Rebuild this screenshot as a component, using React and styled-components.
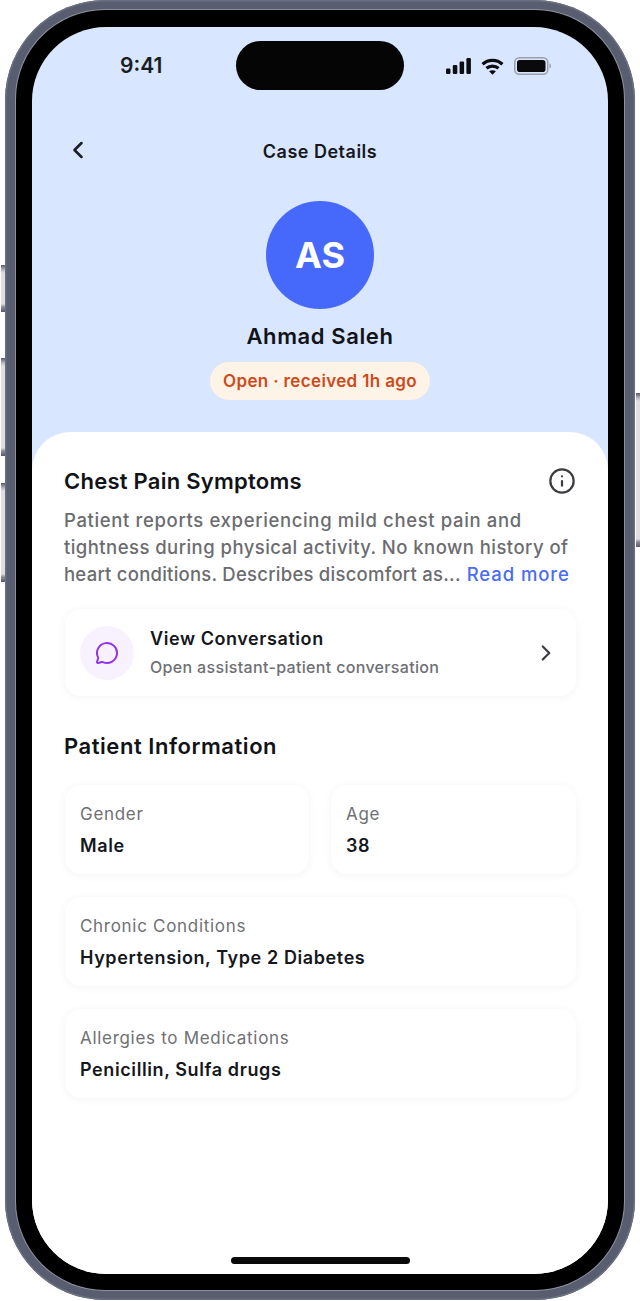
import React from "react";
import styled, { createGlobalStyle } from "styled-components";
import { ChevronLeft, ChevronRight, Info, MessageCircle } from "lucide-react";

const GlobalStyle = createGlobalStyle`
  html, body {
    margin: 0;
    padding: 0;
    background: #fff;
  }
  body {
    font-family: Inter, "Open Sans", "Liberation Sans", sans-serif;
    color: #111318;
    -webkit-font-smoothing: antialiased;
  }
  * {
    box-sizing: border-box;
  }
`;

const Page = styled.div`
  width: 640px;
  height: 1301px;
  padding-left: 5px;
  position: relative;
  overflow: hidden;
`;

const Frame = styled.div`
  width: 630px;
  height: 1300px;
  padding: 10px 11px 10px 11px;
  border-radius: 100px;
  background: #585e70;
  box-shadow: inset 0 0 0 1.5px #696f81;
`;

const Bezel = styled.div`
  height: 100%;
  padding: 17px 16px 16px 16px;
  border-radius: 89px;
  background: #000;
  box-shadow: 0 0 0 1px #8d92a0;
`;

const SideButton = styled.div`
  position: absolute;
  width: 4.5px;
  top: ${(p) => p.$top}px;
  height: ${(p) => p.$height}px;
  ${(p) => (p.$right ? "right: 0;" : "left: 0.5px;")}
  background: linear-gradient(
    180deg,
    #55596a 0,
    #b9bac0 5px,
    #dfdfe2 8px,
    #dfdfe2 calc(100% - 8px),
    #8c8d94 calc(100% - 5px),
    #55596a 100%
  );
`;

const Screen = styled.div`
  position: relative;
  height: 100%;
  display: flex;
  flex-direction: column;
  border-radius: 74px;
  overflow: hidden;
  background: #d8e6ff;
`;

const Island = styled.div`
  position: absolute;
  top: 14px;
  left: 204px;
  width: 168px;
  height: 49px;
  border-radius: 25px;
  background: #050505;
`;

const StatusBar = styled.div`
  height: 76px;
  padding: 27px 57px 0 88px;
  display: flex;
  align-items: flex-start;
  justify-content: space-between;
`;

const Clock = styled.span`
  font-size: 21px;
  line-height: 24px;
  font-weight: 600;
  color: #1a1d24;
`;

const StatusIcons = styled.div`
  display: flex;
  align-items: center;
  gap: 10px;
  height: 24px;
`;

const NavBar = styled.div`
  position: relative;
  height: 96px;
  padding-top: 2px;
  display: flex;
  align-items: center;
  justify-content: center;
`;

const BackButton = styled.span`
  position: absolute;
  left: 32px;
  top: 33px;
  display: flex;
  color: #1a1d24;
`;

const NavTitle = styled.h1`
  margin: 0;
  font-size: 18px;
  line-height: 24px;
  font-weight: 600;
  letter-spacing: 0.5px;
  color: #16181d;
`;

const Profile = styled.div`
  display: flex;
  flex-direction: column;
  align-items: center;
  height: 231px;
  margin-top: 2px;
`;

const Avatar = styled.div`
  width: 108px;
  height: 108px;
  border-radius: 50%;
  background: #4769fb;
  color: #fff;
  display: flex;
  align-items: center;
  justify-content: center;
  font-size: 36px;
  font-weight: 700;
`;

const PatientName = styled.div`
  margin-top: 13px;
  font-size: 22px;
  line-height: 28px;
  font-weight: 600;
  letter-spacing: 0.6px;
  color: #111318;
`;

const StatusPill = styled.div`
  margin-top: 12px;
  height: 38px;
  width: 220px;
  border-radius: 19px;
  background: #fdf3e6;
  color: #cf4a1a;
  display: flex;
  align-items: center;
  justify-content: center;
  font-size: 17px;
  font-weight: 600;
  letter-spacing: 0.35px;
`;

const Sheet = styled.div`
  flex: 1;
  padding: 32px 32px 0 32px;
  border-radius: 38px 38px 0 0;
  background: #fff;
`;

const TitleRow = styled.div`
  display: flex;
  align-items: center;
  justify-content: space-between;
  height: 34px;
`;

const SectionTitle = styled.h2`
  margin: 0;
  font-size: 22px;
  line-height: 34px;
  font-weight: 600;
  letter-spacing: 0.25px;
  color: #111318;
`;

const InfoButton = styled.span`
  display: flex;
  color: #3c3c40;
`;

const Summary = styled.p`
  margin: 9px 0 0 0;
  font-size: 18.5px;
  line-height: 27px;
  font-weight: 500;
  white-space: nowrap;
  color: #6b6c70;
`;

const SummaryLine = styled.span`
  display: block;
  letter-spacing: ${(p) => p.$spacing}px;
`;

const ReadMore = styled.span`
  margin-left: 1px;
  letter-spacing: 0.9px;
  color: #4a6cf0;
`;

const Card = styled.div`
  border-radius: 16px;
  background: #fff;
  box-shadow: 0 1px 10px rgba(20, 24, 40, 0.05);
`;

const ConversationCard = styled(Card)`
  margin: 21px 0 0 1px;
  height: 87px;
  padding: 0 17px 0 15px;
  display: flex;
  align-items: center;
`;

const IconBadge = styled.div`
  width: 54px;
  height: 54px;
  border-radius: 50%;
  background: #f8f1ff;
  color: #9333ea;
  display: flex;
  align-items: center;
  justify-content: center;
`;

const ConversationText = styled.div`
  flex: 1;
  margin-left: 16px;
  display: flex;
  flex-direction: column;
  gap: 7px;
`;

const ConversationTitle = styled.div`
  font-size: 18px;
  line-height: 22px;
  font-weight: 600;
  letter-spacing: 0.57px;
  color: #15171c;
`;

const ConversationSub = styled.div`
  font-size: 16px;
  line-height: 20px;
  font-weight: 500;
  letter-spacing: 0.33px;
  color: #6f7074;
`;

const ChevronWrap = styled.span`
  display: flex;
  color: #3a3b40;
`;

const InfoHeading = styled(SectionTitle)`
  margin-top: 33px;
  letter-spacing: 0.55px;
`;

const InfoGrid = styled.div`
  margin: 22px 0 0 1px;
  display: grid;
  grid-template-columns: 244px 245px;
  column-gap: 22px;
  row-gap: 23px;
`;

const InfoCard = styled(Card)`
  grid-column: ${(p) => (p.$wide ? "1 / -1" : "auto")};
  height: 89px;
  padding: 17px 15px 0 15px;
`;

const InfoLabel = styled.div`
  font-size: 17px;
  line-height: 24px;
  font-weight: 400;
  letter-spacing: 0.7px;
  color: #6f7074;
`;

const InfoValue = styled.div`
  margin-top: 8px;
  font-size: 18px;
  line-height: 24px;
  font-weight: 600;
  letter-spacing: 0.6px;
  color: #15171c;
`;

const HomeIndicator = styled.div`
  position: absolute;
  left: 199px;
  bottom: 10px;
  width: 179px;
  height: 7px;
  border-radius: 4px;
  background: #0a0a0a;
`;

const SignalIcon = () => (
  <svg width="25" height="16" viewBox="0 0 25 16" fill="#0c0d10">
    <rect x="0" y="10.5" width="4.5" height="5.5" rx="1.2" />
    <rect x="6.8" y="7" width="4.5" height="9" rx="1.2" />
    <rect x="13.6" y="3.5" width="4.5" height="12.5" rx="1.2" />
    <rect x="20.4" y="0" width="4.5" height="16" rx="1.2" />
  </svg>
);

const WifiIcon = () => (
  <svg width="23" height="17" viewBox="0 0 24 18" fill="none" stroke="#0c0d10" strokeWidth="3.4">
    <path d="M1.5 6.6C7.4 1.2 16.6 1.2 22.5 6.6" />
    <path d="M5.6 10.9C9.2 7.7 14.8 7.7 18.4 10.9" />
    <path d="M12 17.8L8.4 14C10.4 12.5 13.6 12.5 15.6 14Z" fill="#0c0d10" stroke="none" />
  </svg>
);

const BatteryIcon = () => (
  <svg width="37" height="18" viewBox="0 0 37 18">
    <rect x="0.75" y="0.75" width="33" height="16.5" rx="4.6" fill="none" stroke="#9b9fa8" strokeWidth="1.5" />
    <rect x="3" y="3" width="28.5" height="12" rx="2.8" fill="#0a0a0c" />
    <path d="M35.5 6.5C36.5 7 37 8 37 9S36.5 11 35.5 11.5Z" fill="#9b9fa8" />
  </svg>
);

export default function App() {
  return (
    <Page>
      <GlobalStyle />
      <SideButton $top={265} $height={47} />
      <SideButton $top={358} $height={98} />
      <SideButton $top={483} $height={99} />
      <SideButton $right $top={393} $height={154} />
      <Frame>
        <Bezel>
          <Screen>
            <Island />
            <StatusBar>
              <Clock>9:41</Clock>
              <StatusIcons>
                <SignalIcon />
                <WifiIcon />
                <BatteryIcon />
              </StatusIcons>
            </StatusBar>
            <NavBar>
              <BackButton>
                <ChevronLeft size={28} strokeWidth={2.2} />
              </BackButton>
              <NavTitle>Case Details</NavTitle>
            </NavBar>
            <Profile>
              <Avatar>AS</Avatar>
              <PatientName>Ahmad Saleh</PatientName>
              <StatusPill>Open · received 1h ago</StatusPill>
            </Profile>
            <Sheet>
              <TitleRow>
                <SectionTitle>Chest Pain Symptoms</SectionTitle>
                <InfoButton>
                  <Info size={28} strokeWidth={1.9} />
                </InfoButton>
              </TitleRow>
              <Summary>
                <SummaryLine $spacing={0.64}>Patient reports experiencing mild chest pain and</SummaryLine>
                <SummaryLine $spacing={0.45}>tightness during physical activity. No known history of</SummaryLine>
                <SummaryLine $spacing={0.24}>
                  heart conditions. Describes discomfort as... <ReadMore>Read more</ReadMore>
                </SummaryLine>
              </Summary>
              <ConversationCard>
                <IconBadge>
                  <MessageCircle size={24} strokeWidth={2} />
                </IconBadge>
                <ConversationText>
                  <ConversationTitle>View Conversation</ConversationTitle>
                  <ConversationSub>Open assistant-patient conversation</ConversationSub>
                </ConversationText>
                <ChevronWrap>
                  <ChevronRight size={26} strokeWidth={2} />
                </ChevronWrap>
              </ConversationCard>
              <InfoHeading>Patient Information</InfoHeading>
              <InfoGrid>
                <InfoCard>
                  <InfoLabel>Gender</InfoLabel>
                  <InfoValue>Male</InfoValue>
                </InfoCard>
                <InfoCard>
                  <InfoLabel>Age</InfoLabel>
                  <InfoValue>38</InfoValue>
                </InfoCard>
                <InfoCard $wide>
                  <InfoLabel>Chronic Conditions</InfoLabel>
                  <InfoValue>Hypertension, Type 2 Diabetes</InfoValue>
                </InfoCard>
                <InfoCard $wide>
                  <InfoLabel>Allergies to Medications</InfoLabel>
                  <InfoValue>Penicillin, Sulfa drugs</InfoValue>
                </InfoCard>
              </InfoGrid>
            </Sheet>
            <HomeIndicator />
          </Screen>
        </Bezel>
      </Frame>
    </Page>
  );
}
